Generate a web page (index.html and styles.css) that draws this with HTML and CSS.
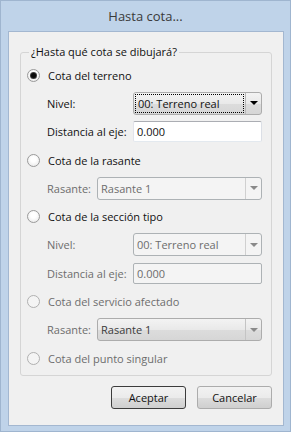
FILE: index.html
```html
<!doctype html>
<html>

<head>
  <meta charset="UTF-8">
  <title>Hasta cota...</title>
  <link rel="stylesheet" href="styles.css">
</head>

<body>
  <div class="window">
    <div class="titlebar">Hasta cota...</div>

    <div class="client">
      <fieldset class="group">
        <legend>¿Hasta qué cota se dibujará?</legend>

        <div class="row">
          <span class="radio checked"></span>
          <span>Cota del terreno</span>
        </div>
        <div class="row sub">
          <span class="lbl">Nivel:</span>
          <div class="combo focused">
            <span class="val"><span class="focusbox">00: Terreno real</span></span>
            <span class="drop"><span class="arrow"></span></span>
          </div>
        </div>
        <div class="row sub">
          <span class="lbl">Distancia al eje:</span>
          <div class="field">0.000</div>
        </div>

        <div class="row">
          <span class="radio"></span>
          <span>Cota de la rasante</span>
        </div>
        <div class="row sub off">
          <span class="lbl short">Rasante:</span>
          <div class="combo wide disabled">
            <span class="val">Rasante 1</span>
            <span class="drop"><span class="arrow"></span></span>
          </div>
        </div>

        <div class="row">
          <span class="radio"></span>
          <span>Cota de la sección tipo</span>
        </div>
        <div class="row sub off">
          <span class="lbl">Nivel:</span>
          <div class="combo disabled">
            <span class="val">00: Terreno real</span>
            <span class="drop"><span class="arrow"></span></span>
          </div>
        </div>
        <div class="row sub off">
          <span class="lbl">Distancia al eje:</span>
          <div class="field disabled">0.000</div>
        </div>

        <div class="row off">
          <span class="radio"></span>
          <span>Cota del servicio afectado</span>
        </div>
        <div class="row sub off">
          <span class="lbl short">Rasante:</span>
          <div class="combo wide dim">
            <span class="val">Rasante 1</span>
            <span class="drop"><span class="arrow"></span></span>
          </div>
        </div>

        <div class="row off">
          <span class="radio"></span>
          <span>Cota del punto singular</span>
        </div>
      </fieldset>

      <div class="buttons">
        <button class="btn default">Aceptar</button>
        <button class="btn">Cancelar</button>
      </div>
    </div>
  </div>
</body>

</html>
```

FILE: styles.css
```css
* {
  margin: 0;
  padding: 0;
  box-sizing: border-box;
}

body {
  margin: 0;
  padding: 0;
  font-family: "Open Sans", "Noto Sans", sans-serif;
  font-size: 11px;
  color: #111;
  background: #bcd1e8;
}

.window {
  width: 291px;
  height: 432px;
  border: 1px solid #9fb5cf;
  background: #bfd3e9;
  display: flex;
  flex-direction: column;
}

.titlebar {
  height: 30px;
  line-height: 30px;
  text-align: center;
  font-size: 13px;
  color: #3a3a3a;
}

.client {
  flex: 1;
  margin: 0 6px 5px 7px;
  border: 1px solid #a3b7d0;
  background: #f0f0f0;
  padding: 12px 11px 0 11px;
}

.group {
  border: 1px solid #d5d5d5;
  border-radius: 3px;
  padding: 0 0 3px 0;
}

.group legend {
  margin-left: 8px;
  padding: 0 2px;
  line-height: 16px;
}

.group legend + .row {
  margin-top: 1px;
}

.row {
  height: 28.3px;
  display: flex;
  align-items: center;
  padding-left: 6px;
  gap: 8px;
  white-space: nowrap;
}

.row.sub {
  padding-left: 26px;
  gap: 0;
}

.row.off {
  color: #6d6d6d;
}

.lbl {
  width: 86px;
}

.lbl.short {
  width: 50px;
}

.radio {
  width: 13px;
  height: 13px;
  border-radius: 50%;
  border: 1px solid #9a9a9a;
  background: radial-gradient(circle at 50% 40%, #ffffff 30%, #e4e4e4 100%);
  display: flex;
  align-items: center;
  justify-content: center;
}

.radio.checked::after {
  content: "";
  width: 5px;
  height: 5px;
  border-radius: 50%;
  background: #0a0a0a;
  box-shadow: 0 0 0 1px #3a3a3a;
}

.row.off .radio {
  border-color: #b0b0b0;
  background: #f4f4f4;
}

.combo {
  width: 129px;
  height: 23px;
  display: flex;
  border: 1px solid #acacac;
  border-radius: 3px;
  background: linear-gradient(#f3f3f3, #e9e9e9 50%, #dcdcdc 51%, #d6d6d6);
  color: #111;
}

.combo.wide {
  width: 165px;
}

.combo .val {
  flex: 1;
  padding: 2px 2px 2px 3px;
  display: flex;
  align-items: center;
}

.combo.focused .val {
  padding: 1px;
}

.focusbox {
  flex: 1;
  height: 100%;
  display: flex;
  align-items: center;
  padding-left: 2px;
  border: 1px dotted #000;
}

.drop {
  width: 16px;
  border-left: 1px solid #b8b8b8;
  display: flex;
  align-items: center;
  justify-content: center;
}

.arrow {
  width: 0;
  height: 0;
  border-left: 4px solid transparent;
  border-right: 4px solid transparent;
  border-top: 4px solid #000;
}

.combo.disabled {
  background: #f4f4f4;
  border-color: #adb2b5;
  color: #6d6d6d;
}

.combo.disabled .drop {
  border-left-color: #d0d0d0;
}

.combo.disabled .arrow,
.combo.dim .arrow {
  border-top-color: #8a8a8a;
}

.combo.dim {
  color: #3a3a3a;
}

.combo.dim .drop {
  border-left-color: #c4c4c4;
}

.field {
  width: 129px;
  height: 21px;
  border: 1px solid #abadb3;
  border-left-color: #e2e3ea;
  border-right-color: #dbdfe6;
  border-bottom-color: #e3e9ef;
  background: #fff;
  border-radius: 2px;
  padding-left: 3px;
  display: flex;
  align-items: center;
  color: #111;
}

.field.disabled {
  background: #f4f4f4;
  border-color: #adb2b5;
  color: #6d6d6d;
}

.buttons {
  display: flex;
  justify-content: flex-end;
  gap: 11px;
  margin-top: 10px;
}

.btn {
  width: 75px;
  height: 23px;
  font-family: inherit;
  font-size: 11px;
  color: #111;
  border: 1px solid #acacac;
  border-radius: 3px;
  background: linear-gradient(#f2f2f2, #ebebeb 50%, #dddddd 51%, #cfcfcf);
}

.btn.default {
  border-color: #3c3c3c;
}
```
